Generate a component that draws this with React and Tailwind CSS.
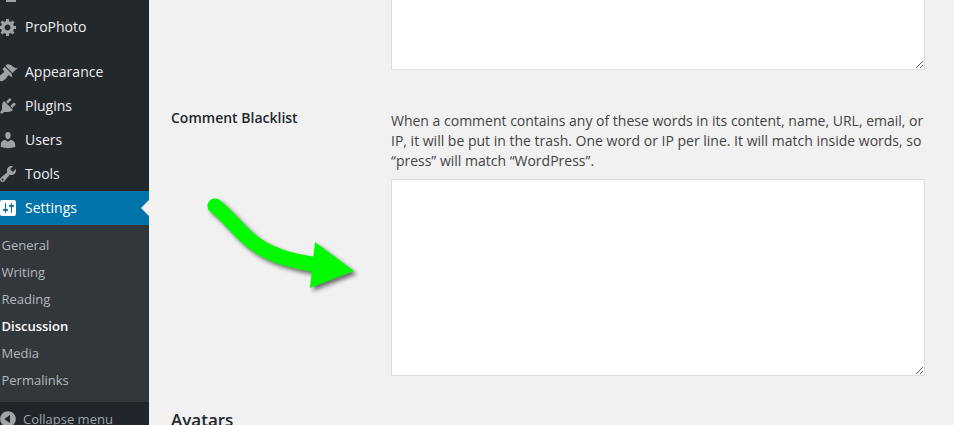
const font = { fontFamily: '"Open Sans", sans-serif' };
const icons = {
  gear: "M18 12h-2.18c-.17.7-.44 1.35-.81 1.93l1.54 1.54-2.1 2.1-1.54-1.54c-.58.36-1.23.63-1.91.79V19H8v-2.18c-.68-.16-1.33-.43-1.91-.79l-1.54 1.54-2.12-2.12 1.54-1.54c-.36-.58-.63-1.23-.79-1.91H1V9.03h2.17c.16-.7.44-1.35.8-1.94L2.43 5.55l2.1-2.1 1.54 1.54c.58-.37 1.24-.64 1.93-.81V2h3v2.18c.68.16 1.33.43 1.91.79l1.54-1.54 2.12 2.12-1.54 1.54c.36.59.64 1.24.8 1.94H18V12zm-8.5 1.5c1.66 0 3-1.34 3-3s-1.34-3-3-3-3 1.34-3 3 1.34 3 3 3z",
  brush: "M14.48 11.06L7.41 3.99l1.5-1.5c.5-.56 2.3-.47 3.51.32 1.21.8 1.43 1.28 2.91 2.1 1.18.64 2.45 1.26 4.45.85zm-.71.71L6.7 4.7 4.93 6.47c-.39.39-.39 1.02 0 1.41l1.06 1.06c.39.39.39 1.03 0 1.42-.6.6-1.43 1.11-2.21 1.69-.35.26-.7.53-1.01.84C1.43 13.23.4 14.98.4 16.45c0 1.46 1.25 2.71 2.71 2.71 1.47 0 3.22-1.03 4.56-2.37.31-.31.58-.66.84-1.01.58-.78 1.09-1.61 1.69-2.21.39-.39 1.03-.39 1.42 0l1.06 1.06c.39.39 1.02.39 1.41 0z",
  plug: "M13.11 4.36L9.87 7.6 8 5.73l3.24-3.24c.35-.34 1.05-.2 1.56.32.52.51.66 1.21.31 1.55zm-8 1.77l.91-1.12 9.01 9.01-1.19.84c-.71.71-2.63 1.16-3.82 1.16H6.14L4.9 17.26c-.59.59-1.54.59-2.12 0-.59-.58-.59-1.53 0-2.12l1.24-1.24v-3.88c0-1.13.4-3.19 1.09-3.89zm7.26 3.97l3.24-3.24c.34-.35 1.04-.21 1.55.31.52.51.66 1.21.31 1.55l-3.24 3.25z",
  user: "M10 9.25c-2.27 0-2.73-3.44-2.73-3.44C7 4.02 7.82 2 9.97 2c2.16 0 2.98 2.02 2.71 3.81 0 0-.41 3.44-2.68 3.44zm0 2.57L12.72 10c2.39 0 4.52 2.33 4.52 4.53v2.49s-3.65 1.13-7.24 1.13c-3.65 0-7.24-1.13-7.24-1.13v-2.49c0-2.25 1.94-4.48 4.47-4.48z",
  tools: "M16.68 9.77c-1.34 1.34-3.3 1.67-4.95.99l-5.41 6.52c-.99.99-2.59.99-3.58 0s-.99-2.59 0-3.57l6.52-5.42c-.68-1.65-.35-3.61.99-4.95 1.28-1.28 3.12-1.62 4.72-1.06l-2.89 2.89 2.82 2.82 2.86-2.87c.53 1.58.18 3.39-1.08 4.65zM3.81 16.21c.4.39 1.04.39 1.43 0 .4-.4.4-1.04 0-1.43-.39-.4-1.03-.4-1.43 0-.39.39-.39 1.03 0 1.43z",
  settings: "M18 16V4c0-1.1-.9-2-2-2H4c-1.1 0-2 .9-2 2v12c0 1.1.9 2 2 2h12c1.1 0 2-.9 2-2zM8 11h1c.55 0 1 .45 1 1s-.45 1-1 1H8v1.5c0 .28-.22.5-.5.5s-.5-.22-.5-.5V13H6c-.55 0-1-.45-1-1s.45-1 1-1h1V5.5c0-.28.22-.5.5-.5s.5.22.5.5V11zm5-2h-1c-.55 0-1-.45-1-1s.45-1 1-1h1V5.5c0-.28.22-.5.5-.5s.5.22.5.5V7h1c.55 0 1 .45 1 1s-.45 1-1 1h-1v5.5c0 .28-.22.5-.5.5s-.5-.22-.5-.5V9z",
  collapse: "M10 2.16c4.33 0 7.84 3.51 7.84 7.84s-3.51 7.84-7.84 7.84S2.16 14.33 2.16 10 5.71 2.16 10 2.16zm2 11.72V6.12L6.18 9.97z",
};

function Icon({ d, className }) {
  return (
    <svg viewBox="0 0 20 20" className={`w-5 h-5 shrink-0 -ml-[2px] ${className}`} fill="currentColor" fillRule="evenodd">
      <path d={d} />
    </svg>
  );
}

function MenuItem({ icon, label, active }) {
  return (
    <div className={`relative h-[34px] shrink-0 flex items-center gap-[7px] text-sm ${active ? "bg-[#0073aa] text-white" : "text-[#eeeeee]"}`}>
      <Icon d={icons[icon]} className={active ? "text-white" : "text-[#9ea3a8]"} />
      <span>{label}</span>
      {active && (
        <span className="absolute right-0 top-[9px] w-0 h-0 border-y-[8px] border-y-transparent border-r-[8px] border-r-[#f1f1f1]" />
      )}
    </div>
  );
}

export default function App() {
  const subs = ["General", "Writing", "Reading", "Discussion", "Media", "Permalinks"];
  return (
    <div className="relative w-[954px] h-[425px] overflow-hidden flex bg-[#f1f1f1] text-[#444444]" style={font}>
      <aside className="w-[149px] shrink-0 bg-[#23282d] flex flex-col overflow-hidden">
        <div className="h-[10px] shrink-0">
          <div className="ml-[6px] w-[10px] h-[2px] bg-[#9ea3a8]" />
        </div>
        <MenuItem icon="gear" label="ProPhoto" />
        <div className="h-[11px] shrink-0" />
        <MenuItem icon="brush" label="Appearance" />
        <MenuItem icon="plug" label="Plugins" />
        <MenuItem icon="user" label="Users" />
        <MenuItem icon="tools" label="Tools" />
        <MenuItem icon="settings" label="Settings" active />
        <div className="bg-[#32373c] pt-[7px] h-[177px] shrink-0 pl-[1.5px] text-[13px]">
          {subs.map((s) => (
            <div key={s} className={`h-[27px] flex items-center ${s === "Discussion" ? "text-white font-semibold" : "text-[#b4b9be]"}`}>
              {s}
            </div>
          ))}
        </div>
        <div className="flex-1 flex items-start gap-[5px] pt-[7px] text-[13px] text-[#a0a5aa] bg-[#1f252a]">
          <Icon d={icons.collapse} className="text-[#a0a5aa]" />
          <span className="leading-5">Collapse menu</span>
        </div>
      </aside>

      <main className="flex-1 min-w-0 pl-[22px] text-sm">
        <div className="h-[70px] pl-[220px] w-[776px] flex flex-col justify-end">
          <textarea readOnly className="block w-[534px] h-[100px] shrink-0 bg-white border border-[#dddddd] outline-none" />
        </div>
        <div className="flex pt-[37px]">
          <div className="w-[220px] shrink-0 font-semibold text-[#23282d] pt-[1px] leading-5">Comment Blacklist</div>
          <div className="w-[534px] shrink-0 pt-[4px]">
            <p className="leading-5 mb-[8px]">
              When a comment contains any of these words in its content, name, URL, email, or IP, it will be put in the trash. One word or IP per line. It will match inside words, so “press” will match “WordPress”.
            </p>
            <textarea readOnly className="block w-[534px] h-[197px] bg-white border border-[#dddddd] outline-none" />
          </div>
        </div>
        <h2 className="mt-[32px] text-[17px] leading-6 font-semibold text-[#23282d]">Avatars</h2>
      </main>

      <svg className="absolute left-[200px] top-[190px] w-[170px] h-[110px] overflow-visible" viewBox="200 190 170 110" style={{ filter: "drop-shadow(3px 3px 2px rgba(0,0,0,0.55))" }}>
        <path d="M215 206 C 226 214 236 228 250 240 C 268 255 290 261 318 265" fill="none" stroke="#00fb00" strokeWidth="15" strokeLinecap="round" />
        <path d="M315 242 L354 271 L310 288 Z" fill="#00fb00" />
      </svg>
    </div>
  );
}
